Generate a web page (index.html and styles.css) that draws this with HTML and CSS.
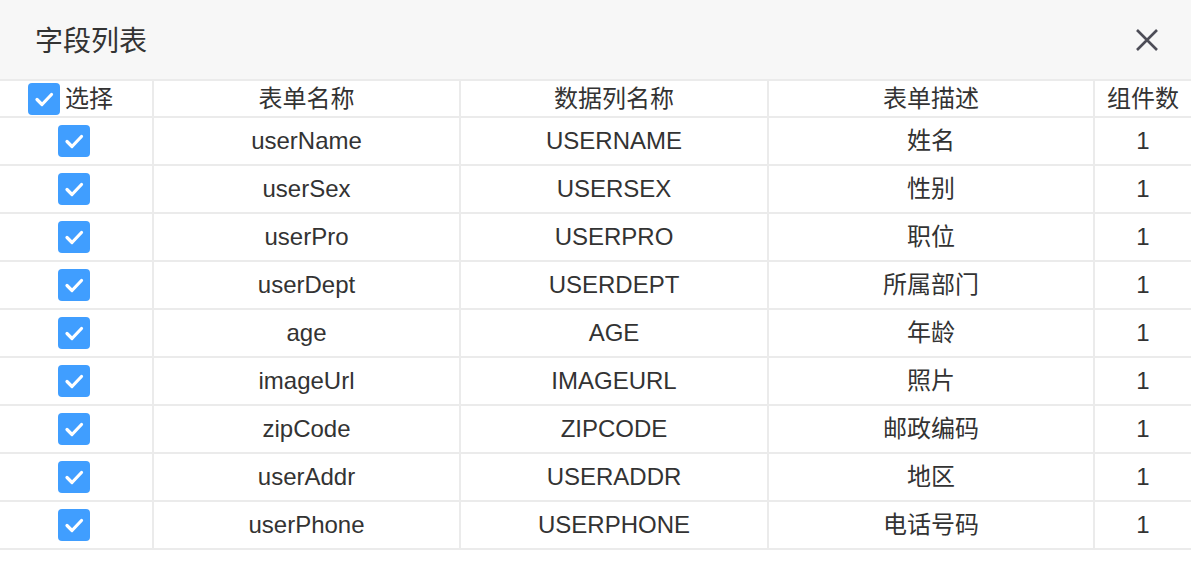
FILE: index.html
```html
<!DOCTYPE html>
<html lang="zh-CN">
<head>
    <meta charset="UTF-8">
    <title>字段列表</title>
    <link rel="stylesheet" href="styles.css">
</head>
<body>
    <div class="dialog">
        <div class="dialog-header">
            <span class="dialog-title">字段列表</span>
            <button class="btn-close" title="关闭">
                <svg width="24" height="24" viewBox="0 0 24 24"><path d="M2 2 L22 22 M22 2 L2 22" stroke="#4d4d57" stroke-width="2.6" fill="none"/></svg>
            </button>
        </div>

        <div class="field-table">
            <div class="row head">
                <div class="cell select-all">
                    <span class="checkbox"><svg width="32" height="32" viewBox="0 0 32 32"><path d="M9 16.5 L14 21.5 L23.5 11.5" stroke="#fff" stroke-width="3.2" fill="none" stroke-linecap="round" stroke-linejoin="round"/></svg></span>
                    <span>选择</span>
                </div>
                <div class="cell">表单名称</div>
                <div class="cell">数据列名称</div>
                <div class="cell">表单描述</div>
                <div class="cell">组件数</div>
            </div>
            <div id="field-rows"></div>
        </div>
    </div>

    <script>
        const fields = [
            { name: 'userName', column: 'USERNAME', desc: '姓名', count: 1 },
            { name: 'userSex', column: 'USERSEX', desc: '性别', count: 1 },
            { name: 'userPro', column: 'USERPRO', desc: '职位', count: 1 },
            { name: 'userDept', column: 'USERDEPT', desc: '所属部门', count: 1 },
            { name: 'age', column: 'AGE', desc: '年龄', count: 1 },
            { name: 'imageUrl', column: 'IMAGEURL', desc: '照片', count: 1 },
            { name: 'zipCode', column: 'ZIPCODE', desc: '邮政编码', count: 1 },
            { name: 'userAddr', column: 'USERADDR', desc: '地区', count: 1 },
            { name: 'userPhone', column: 'USERPHONE', desc: '电话号码', count: 1 }
        ];

        const check = '<span class="checkbox"><svg width="32" height="32" viewBox="0 0 32 32"><path d="M9 16.5 L14 21.5 L23.5 11.5" stroke="#fff" stroke-width="3.2" fill="none" stroke-linecap="round" stroke-linejoin="round"/></svg></span>';

        const list = document.getElementById('field-rows');
        fields.forEach(f => {
            const row = document.createElement('div');
            row.className = 'row';
            row.innerHTML = `
                <div class="cell check-cell">${check}</div>
                <div class="cell">${f.name}</div>
                <div class="cell">${f.column}</div>
                <div class="cell">${f.desc}</div>
                <div class="cell">${f.count}</div>
            `;
            list.appendChild(row);
        });
    </script>
</body>
</html>
```

FILE: styles.css
```css
body {
    margin: 0;
    background-color: #fff;
    font-family: 'Liberation Sans', 'Noto Sans CJK SC', sans-serif;
    color: #333;
}
.dialog {
    width: 1191px;
}
.dialog-header {
    height: 79px;
    display: flex;
    align-items: center;
    justify-content: space-between;
    padding: 0 32px 0 35px;
    background-color: #f7f7f7;
    border-bottom: 2px solid #ebebeb;
}
.dialog-title {
    font-family: 'Noto Sans CJK SC', sans-serif;
    font-size: 28px;
    color: #333;
    line-height: 1;
    padding-bottom: 2px;
}
.btn-close {
    border: none;
    background: none;
    padding: 0;
    width: 24px;
    height: 24px;
    cursor: pointer;
    display: flex;
}
.row {
    display: grid;
    grid-template-columns: 152px 305px 306px 324px 1fr;
    column-gap: 2px;
    background-color: #ebebeb;
    border-bottom: 2px solid #ebebeb;
    height: 46px;
}
.row.head {
    height: 35px;
}
.cell {
    background-color: #fff;
    display: flex;
    align-items: center;
    justify-content: center;
    font-size: 24px;
    line-height: 1;
    color: #333;
}
.select-all {
    justify-content: flex-start;
    padding-left: 28px;
    gap: 5px;
}
.check-cell {
    padding-right: 4px;
}
.checkbox {
    width: 32px;
    height: 32px;
    border-radius: 4px;
    background-color: #409eff;
    display: inline-flex;
}
```
